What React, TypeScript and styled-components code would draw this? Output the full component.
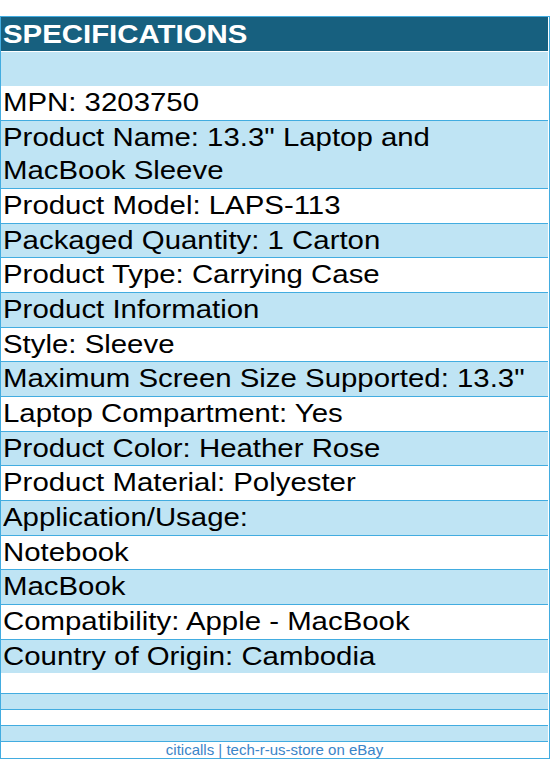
import styled, { createGlobalStyle } from "styled-components";

const GlobalStyle = createGlobalStyle`
  body {
    margin: 0;
    background: #ffffff;
    font-family: "Liberation Sans", Arial, sans-serif;
  }
`;

type Spec = { text: string; shade: boolean; line: boolean };

const specs: Spec[] = [
  { text: "MPN: 3203750", shade: false, line: false },
  { text: 'Product Name: 13.3" Laptop and MacBook Sleeve', shade: true, line: true },
  { text: "Product Model: LAPS-113", shade: false, line: true },
  { text: "Packaged Quantity: 1 Carton", shade: true, line: true },
  { text: "Product Type: Carrying Case", shade: false, line: true },
  { text: "Product Information", shade: true, line: true },
  { text: "Style: Sleeve", shade: false, line: true },
  { text: 'Maximum Screen Size Supported: 13.3"', shade: true, line: true },
  { text: "Laptop Compartment: Yes", shade: false, line: true },
  { text: "Product Color: Heather Rose", shade: true, line: true },
  { text: "Product Material: Polyester", shade: false, line: true },
  { text: "Application/Usage:", shade: true, line: true },
  { text: "Notebook", shade: false, line: true },
  { text: "MacBook", shade: true, line: true },
  { text: "Compatibility: Apple - MacBook", shade: false, line: true },
  { text: "Country of Origin: Cambodia", shade: true, line: true },
];

const App = () => {
  return (
    <>
      <GlobalStyle />
      <Page>
        <Table>
          <Header>
            <Wide>SPECIFICATIONS</Wide>
          </Header>
          <Gap />
          <Blank $shade $h={34} />
          {specs.map((s) => (
            <Row key={s.text} $shade={s.shade} $line={s.line}>
              <Wide>{s.text}</Wide>
            </Row>
          ))}
          <Blank $h={20} />
          <Blank $shade $line $h={15} />
          <Blank $line $h={15} />
          <Blank $shade $line $h={15} />
          <Footer>citicalls | tech-r-us-store on eBay</Footer>
        </Table>
      </Page>
    </>
  );
};

export default App;

const Page = styled.div`
  padding-top: 16px;
  width: 550px;
`;

const Table = styled.div`
  width: 547px;
  border: 1px solid #42ace0;
  display: flex;
  flex-direction: column;
  padding-right: 1px;
`;

// the source text is drawn a bit wider than Arial
const Wide = styled.span`
  display: block;
  width: 476px;
  transform: scaleX(1.13);
  transform-origin: left center;
`;

const Header = styled.div`
  background: #17607f;
  color: #ffffff;
  font-weight: 700;
  font-size: 26px;
  line-height: 34px;
  height: 34px;
  padding-left: 2px;
`;

const Gap = styled.div`
  height: 1px;
  background: #ffffff;
`;

const Blank = styled.div<{ $shade?: boolean; $line?: boolean; $h: number }>`
  height: ${({ $h }) => $h}px;
  background: ${({ $shade }) => ($shade ? "#bfe4f4" : "#ffffff")};
  border-top: ${({ $line }) => ($line ? "1px solid #42ace0" : "none")};
`;

const Row = styled.div<{ $shade: boolean; $line: boolean }>`
  background: ${({ $shade }) => ($shade ? "#bfe4f4" : "#ffffff")};
  border-top: ${({ $line }) => ($line ? "1px solid #42ace0" : "none")};
  color: #000000;
  font-size: 26px;
  line-height: 33.65px;
  padding-left: 2px;
`;

const Footer = styled.div`
  border-top: 1px solid #42ace0;
  height: 16px;
  line-height: 16px;
  font-size: 15px;
  color: #3a84c8;
  text-align: center;
`;
